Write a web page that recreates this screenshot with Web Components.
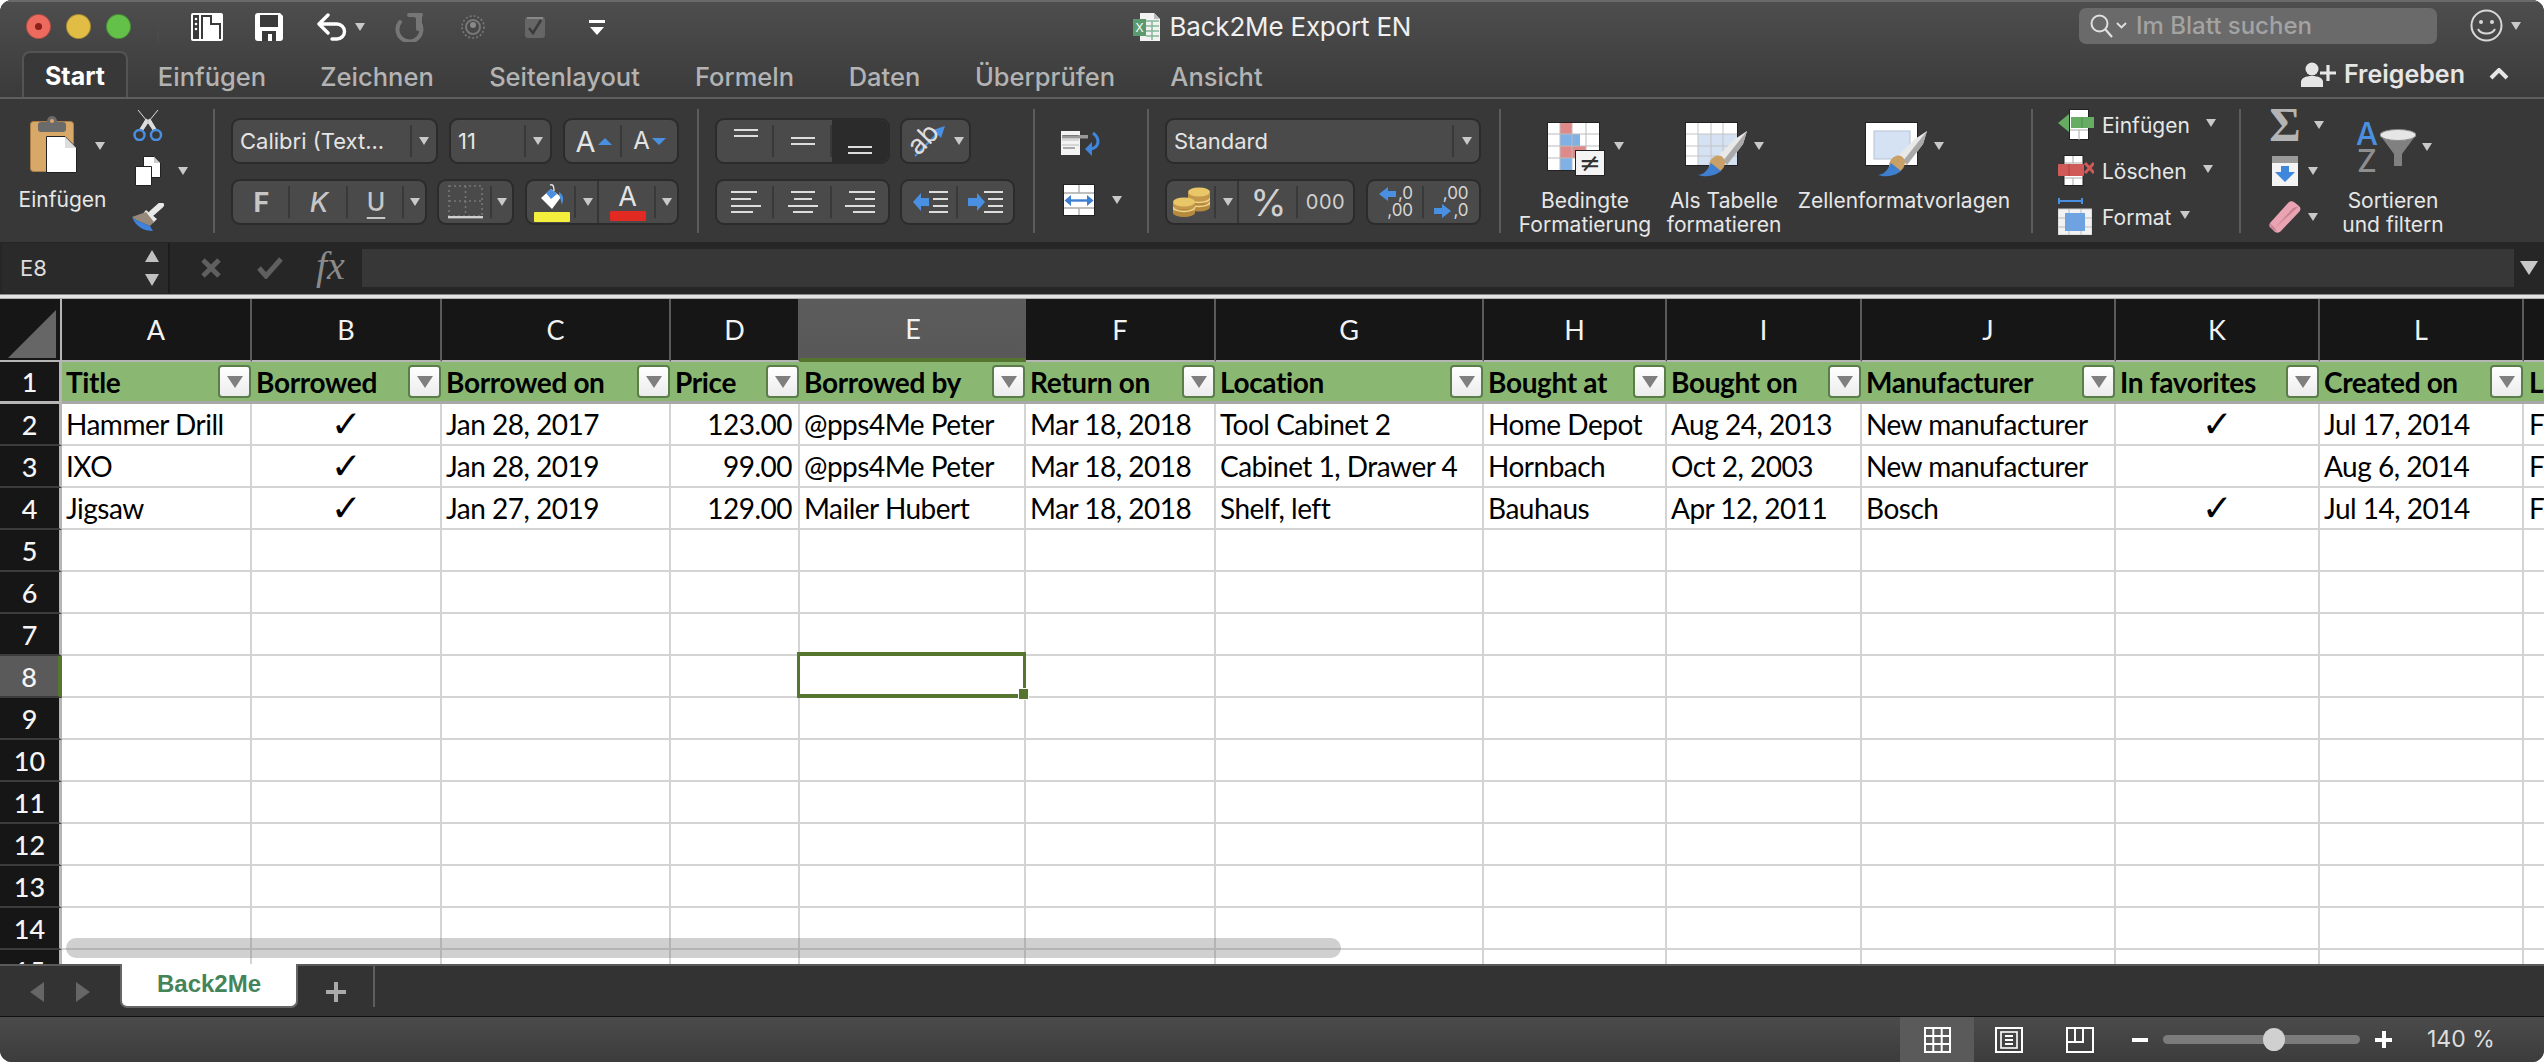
<!DOCTYPE html>
<html lang="de"><head><meta charset="utf-8"><title>Back2Me Export EN</title>
<style>html,body{margin:0;padding:0;background:#fff;overflow:hidden}</style></head>
<body><x-window></x-window>
<script>
const ICONS={
sidebar:[32,28,'<rect width="32" height="28" rx="2" fill="#fff"/><rect x="2" y="2" width="6" height="24" fill="#3a3a3a"/><circle cx="5" cy="6" r="1.3" fill="#fff"/><circle cx="5" cy="11" r="1.3" fill="#fff"/><circle cx="5" cy="16" r="1.3" fill="#fff"/><path d="M10 2H21V10H30V26H28V12H19V4H12V26H10Z" fill="#3a3a3a"/>'],
save:[28,28,'<path d="M3 0H25L28 3V25a3 3 0 0 1-3 3H3a3 3 0 0 1-3-3V3a3 3 0 0 1 3-3Z" fill="#fff"/><rect x="5" y="2" width="18" height="12" fill="#3a3a3a"/><path d="M7 28V18H21V28H17V21H13V28Z" fill="#3a3a3a"/>'],
undo:[31,28,'<path d="M11 2L2 11L11 20M2 11H20a7.5 7.5 0 0 1 0 15H15" fill="none" stroke="#fff" stroke-width="3.4" stroke-linecap="round" stroke-linejoin="round"/>'],
redo:[30,30,'<path d="M6 10A12 12 0 1 0 24 9V17M15 3H27" fill="none" stroke="#767676" stroke-width="4" stroke-linecap="round"/><path d="M15 1H28V11Z" fill="#767676"/>'],
ring:[24,26,'<circle cx="12" cy="13" r="11" fill="#474747" stroke="#7a7a7a" stroke-width="1.6" stroke-dasharray="2 2"/><circle cx="12" cy="13" r="7" fill="none" stroke="#777" stroke-width="2"/><circle cx="12" cy="11" r="3" fill="#8a8a8a"/>'],
chk:[20,23,'<rect x="0" y="1" width="20" height="21" rx="3" fill="#666"/><path d="M2 1H18V3H2Z" fill="#888"/><path d="M4 12L8 17L16 4" fill="none" stroke="#3b3b3b" stroke-width="2.5"/>'],
custom:[16,15,'<rect width="16" height="3" fill="#fff"/><path d="M1 7H15L8 15Z" fill="#fff"/>'],
xls:[27,28,'<path d="M7 0H21L27 6V28H7Z" fill="#f2f2f2"/><path d="M21 0V6H27Z" fill="#bbb"/><path d="M13 8H26M13 13H26M13 18H26M13 23H26M19 8V27" stroke="#86b89a" stroke-width="1.6"/><rect x="0" y="6" width="13" height="17" fill="#5b9a6e"/><text x="6.5" y="19" font-family="Liberation Sans" font-size="12" fill="#fff" text-anchor="middle">X</text>'],
search:[24,24,'<circle cx="9.5" cy="9.5" r="8" fill="none" stroke="#e0e0e0" stroke-width="2"/><path d="M15 15L22 23" stroke="#e0e0e0" stroke-width="2.2"/>'],
chev:[11,7,'<path d="M1 1L5.5 5.5L10 1" fill="none" stroke="#e0e0e0" stroke-width="1.8"/>'],
smile:[33,33,'<circle cx="16.5" cy="16.5" r="15" fill="none" stroke="#d8d8d8" stroke-width="2"/><circle cx="11" cy="13" r="2" fill="#d8d8d8"/><circle cx="22" cy="13" r="2" fill="#d8d8d8"/><path d="M8 20C11 26 22 26 25 20" fill="none" stroke="#d8d8d8" stroke-width="2"/>'],
person:[35,25,'<circle cx="11" cy="7" r="6.5" fill="#e6e6e6"/><path d="M0 25V20C0 16 5 14 11 14S22 16 22 20V25Z" fill="#e6e6e6"/><path d="M27 3V19M19 11H35" stroke="#e6e6e6" stroke-width="3.2"/>'],
up:[20,12,'<path d="M2 10L10 2L18 10" fill="none" stroke="#e6e6e6" stroke-width="4"/>'],
clip:[47,58,'<rect x="0.5" y="6.5" width="43" height="50" rx="3" fill="#d7a868" stroke="#a87f49"/><rect x="8" y="7" width="28" height="10" rx="3" fill="#6b6b6b"/><circle cx="22" cy="6" r="5" fill="#6b6b6b"/><circle cx="22" cy="6" r="2" fill="#d7a868"/><path d="M16.5 21.5H35L46.5 33V57.5H16.5Z" fill="#fff" stroke="#222"/><path d="M35 22V33H46Z" fill="#ddd"/>'],
cut:[30,32,'<path d="M5 1L14 12L20 21L23 20L17 10L14 12M25 1L16 12L10 21L7 20L13 10L16 12" fill="#dedede" stroke="#dedede" stroke-width="1"/><circle cx="6.5" cy="26" r="5" fill="none" stroke="#4a90e2" stroke-width="2.4"/><circle cx="23" cy="26" r="5" fill="none" stroke="#4a90e2" stroke-width="2.4"/>'],
copy:[26,30,'<path d="M8.5 .5H19L25.5 7V21.5H8.5Z" fill="#fff" stroke="#222"/><path d="M19 1V7H25Z" fill="#ccc"/><path d="M.5 10.5H16.5V29.5H.5Z" fill="#fff" stroke="#222"/>'],
brush:[33,29,'<path d="M20 10L29 2" stroke="#e8e8e8" stroke-width="6" stroke-linecap="round"/><path d="M14 7L25 16L21 20L10 12Z" fill="#e8e8e8"/><path d="M0 14L14 9L22 19L18 23L4 17Z" fill="#97897a"/><path d="M0 14L4 17L18 23L21 28C12 28 4 24 0 14Z" fill="#3f82db"/>'],
borders:[35,34,'<rect x="1" y="1" width="33" height="30" fill="none" stroke="#777" stroke-width="1.6" stroke-dasharray="2 3"/><path d="M17.5 1V31M1 16H34" stroke="#777" stroke-width="1.6" stroke-dasharray="2 3"/><rect y="31" width="35" height="2.4" fill="#cfcfcf"/>'],
bucket:[26,28,'<path d="M11 2C14 1 15 3 15 8" fill="none" stroke="#ddd" stroke-width="1.5"/><path d="M2 15L12 6L22 14L13 26Z" fill="#fff"/><path d="M7 10L12 6L18 11L12 16Z" fill="#4a90e2"/><path d="M20 9C26 13 24 18 23 22C22 18 21 14 20 12Z" fill="#4a90e2"/>'],
lt:[24,8,'<rect width="24" height="2" fill="#ddd"/><rect y="6" width="24" height="2" fill="#ddd"/>'],
al:[30,22,'<path d="M0 1H26M0 8H20M0 15H30M0 21H22" stroke="#ddd" stroke-width="2"/>'],
ac:[30,22,'<path d="M3 1H27M6 8H24M0 15H30M5 21H25" stroke="#ddd" stroke-width="2"/>'],
ar:[30,22,'<path d="M4 1H30M10 8H30M0 15H30M8 21H30" stroke="#ddd" stroke-width="2"/>'],
orient:[34,32,'<path d="M3 31L27 7" stroke="#4a90e2" stroke-width="2"/><path d="M33 1L29 13L21 5Z" fill="#4a90e2"/>'],
indl:[35,22,'<path d="M16 1H35M20 8H35M20 15H35M16 21H35" stroke="#ddd" stroke-width="2"/><path d="M0 11L8 2V7H16V15H8V20Z" fill="#4a90e2"/>'],
indr:[35,22,'<path d="M16 1H35M20 8H35M20 15H35M16 21H35" stroke="#ddd" stroke-width="2"/><path d="M17 11L9 2V7H0V15H9V20Z" fill="#4a90e2"/>'],
wrap:[40,26,'<rect x="0" y="1" width="19" height="24" fill="#f3f3f3"/><rect x="1" y="5" width="26" height="3.5" fill="#999"/><rect x="2" y="5" width="15" height="1" fill="#777"/><rect x="2" y="17" width="12" height="2" fill="#aaa"/><path d="M1 10H18M1 15H18" stroke="#bbb"/><path d="M32 3C40 9 38 18 29 19" fill="none" stroke="#3f86dd" stroke-width="3"/><path d="M31 12V26L24 19Z" fill="#3f86dd"/>'],
merge:[32,32,'<rect x=".5" y=".5" width="31" height="31" fill="#fff" stroke="#222"/><path d="M1 9H31M1 24H31M16 1V9M16 24V31" stroke="#aaa" stroke-width="1.3"/><rect x="1" y="10" width="30" height="13" fill="#fff"/><path d="M6 16.5H26" stroke="#3f7fd0" stroke-width="2.4"/><path d="M1.5 16.5L8 11V22ZM30.5 16.5L24 11V22Z" fill="#3f7fd0"/>'],
coins:[37,30,'<rect x="15" y="6" width="22" height="14" fill="#c4984a"/><ellipse cx="26" cy="20" rx="11" ry="4.5" fill="#b58a3e"/><path d="M15 11a11 4.5 0 0 0 22 0M15 15a11 4.5 0 0 0 22 0" fill="none" stroke="#f0d68a" stroke-width="1.4"/><ellipse cx="26" cy="5" rx="11" ry="4.5" fill="#e9c768"/><rect x="0" y="16" width="22" height="10" fill="#c4984a"/><ellipse cx="11" cy="26" rx="11" ry="4" fill="#b58a3e"/><path d="M0 20a11 4.5 0 0 0 22 0" fill="none" stroke="#f0d68a" stroke-width="1.4"/><ellipse cx="11" cy="15" rx="11" ry="4.5" fill="#e9c768"/>'],
arl:[17,14,'<path d="M0 7L9 0V4H17V10H9V14Z" fill="#4a90e2"/>'],
arr:[17,14,'<path d="M17 7L8 0V4H0V10H8V14Z" fill="#4a90e2"/>'],
cond:[58,54,'<rect x=".5" y=".5" width="52" height="48" fill="#fff" stroke="#222"/><rect x="13" y="1" width="12" height="11" fill="#dd8a88"/><rect x="13" y="12" width="20" height="12" fill="#7fb0e6"/><rect x="13" y="24" width="26" height="12" fill="#dd8a88"/><rect x="13" y="36" width="12" height="12" fill="#7fb0e6"/><path d="M13 1V48M25 1V48M39 1V48M1 12H52M1 24H52M1 36H52" stroke="#bbb" stroke-width="1" fill="none"/><rect x="28.5" y="28.5" width="29" height="25" fill="#f4f4f4" stroke="#222"/>'],
tstyle:[63,55,'<rect x=".5" y=".5" width="52" height="43" fill="#fff" stroke="#222"/><rect x="13" y="12" width="39" height="31" fill="#d5e2f3"/><path d="M13 1V43M26 1V43M38 1V43M1 12H52M1 24H52M1 34H52" stroke="#c4c4c4" fill="none"/><path d="M62 9L58 22L42 43L33 34L50 17Z" fill="#e9e9e9"/><path d="M62 9L58 22L42 43L38 39Z" fill="#a9a9a9"/><ellipse cx="32" cy="42" rx="7.5" ry="9" fill="#c9a168" transform="rotate(35 32 42)"/><path d="M13 53C22 52 24 44 26 41L36 49C31 53 23 56 13 53Z" fill="#3f7fd0"/>'],
cstyle:[63,55,'<rect x=".5" y=".5" width="52" height="43" fill="#fff" stroke="#222"/><rect x="9" y="9" width="36" height="28" fill="#d5e2f3" stroke="#b5c2d3"/><path d="M62 9L58 22L42 43L33 34L50 17Z" fill="#e9e9e9"/><path d="M62 9L58 22L42 43L38 39Z" fill="#a9a9a9"/><ellipse cx="32" cy="42" rx="7.5" ry="9" fill="#c9a168" transform="rotate(35 32 42)"/><path d="M13 53C22 52 24 44 26 41L36 49C31 53 23 56 13 53Z" fill="#3f7fd0"/>'],
cins:[36,32,'<rect x="11.500" y=".5" width="19" height="30" fill="#fff" stroke="#222"/><path d="M12 21H30M21 21V31" stroke="#aaa"/><rect x="13" y="8" width="23" height="11" fill="#66ad63"/><path d="M24 8V19" stroke="#4c8c4c"/><path d="M0 14L11 5V23Z" fill="#66ad63"/>'],
cdel:[36,32,'<rect x="6" y=".5" width="19" height="30" fill="#fff" stroke="#222"/><path d="M7 8H24M15 1V8M7 23H24M15 23V30" stroke="#aaa"/><rect x="0" y="9" width="26" height="12" rx="1" fill="#cf5a58"/><path d="M11 9V21" stroke="#a84442"/><path d="M27 8L36 18M36 8L27 18" stroke="#cf5a58" stroke-width="3"/>'],
cfmt:[34,37,'<path d="M1 3H24" stroke="#4a90e2" stroke-width="2" stroke-dasharray="0"/><path d="M1 0V6M24 0V6" stroke="#4a90e2" stroke-width="2"/><rect y="11" width="34" height="26" fill="#f2f2f2" stroke="#ccc"/><path d="M11 11V37M23 11V37M0 20H34M0 29H34" stroke="#bbb"/><rect x="7" y="15" width="20" height="18" fill="#6fa2e0"/>'],
filld:[26,30,'<rect width="26" height="30" fill="#f4f4f4"/><rect width="26" height="7" fill="#9a9a9a"/><path d="M13 26L3 16H9V10H17V16H23Z" fill="#3f86dd"/>'],
eraser:[32,32,'<path d="M1 22L19 2C21 0 23 0 25 1L30 5C32 7 32 9 30 11L12 30C10 32 8 32 6 31L2 27C0 26 0 24 1 22Z" fill="#e9a3b2"/><path d="M1 22L6 27L8 31L2 27Z M6 27L24 7L30 5" fill="#c98292"/>'],
funnel:[36,38,'<path d="M0 6L14 25V37L22 37V25L36 6Z" fill="#808080"/><ellipse cx="18" cy="6" rx="18" ry="5.500" fill="#e6e6e6" stroke="#8a8a8a"/>'],
az:[26,52,'<text x="13" y="23" text-anchor="middle" font-family="Inter" font-weight="500" font-size="31" fill="#4a90e2">A</text><text x="13" y="50" text-anchor="middle" font-family="Inter" font-weight="500" font-size="31" fill="#8e8e8e">Z</text>'],
fxx:[22,20,'<path d="M3 2L19 18M19 2L3 18" stroke="#5f5f5f" stroke-width="5"/>'],
fxc:[28,22,'<path d="M3 11L10 19L25 2" fill="none" stroke="#5f5f5f" stroke-width="5"/>'],
vgrid:[27,26,'<rect x="1" y="1" width="25" height="24" fill="none" stroke="#fff" stroke-width="2"/><path d="M9.300 1V25M17.700 1V25M1 9H26M1 17H26" stroke="#fff" stroke-width="2"/>'],
vpage:[28,26,'<rect x="1" y="1" width="26" height="24" fill="none" stroke="#fff" stroke-width="2"/><rect x="6" y="5" width="16" height="16" fill="none" stroke="#fff" stroke-width="1.600"/><path d="M10 9H18M10 13H18M10 17H18" stroke="#fff" stroke-width="1.800"/>'],
vbreak:[28,26,'<rect x="1" y="1" width="26" height="24" fill="none" stroke="#fff" stroke-width="2"/><path d="M1 15H17V1M9 1V15" fill="none" stroke="#fff" stroke-width="2"/>']
};
function def(name,css,html,init){
  customElements.define(name,class extends HTMLElement{
    constructor(){super();const r=this.attachShadow({mode:'open'});
      r.innerHTML='<style>'+css+'</style>'+(typeof html==='function'?html(this):html);}
    connectedCallback(){if(init&&!this._i){this._i=1;init(this);}}
  });
}
customElements.define('x-icon',class extends HTMLElement{
  constructor(){super();this.attachShadow({mode:'open'});}
  connectedCallback(){const d=ICONS[this.getAttribute('n')];
    this.shadowRoot.innerHTML=`<style>:host{display:block;flex:none;line-height:0}</style><svg xmlns="http://www.w3.org/2000/svg" width="${d[0]}" height="${d[1]}" viewBox="0 0 ${d[0]} ${d[1]}">${d[2]}</svg>`;}
});
customElements.define('x-caret',class extends HTMLElement{
  constructor(){super();this.attachShadow({mode:'open'}).innerHTML=`<style>:host{display:block;flex:none;width:10px;height:8px;line-height:0}</style><svg width="10" height="8" viewBox="0 0 10 8"><path d="M0 0H10L5 8Z" fill="#c9c9c9"/></svg>`;}
});
def('x-seg',`:host{display:flex;box-sizing:border-box;height:46px;border:2px solid #2b2b2b;border-radius:9px;background:#4a4a4a;overflow:hidden;flex:none}`,`<slot></slot>`);
def('x-c',`:host{display:flex;flex:none;align-items:center;justify-content:center;position:relative;height:100%;box-sizing:border-box;font:400 22px/1 Inter,sans-serif;color:#e4e4e4}
:host([l]){justify-content:flex-start;padding-left:7px}
:host([d])::after{content:"";position:absolute;right:0;top:5px;bottom:5px;width:2px;background:#393939}
:host([f])::after{content:"";position:absolute;right:0;top:0;bottom:0;width:2px;background:#363636}
:host([on]){background:#2b2b2b}`,`<slot></slot>`);

def('x-titlebar',`:host{display:flex;align-items:center;height:55px;position:relative}
.light{width:25px;height:25px;border-radius:50%;box-sizing:border-box;border:1px solid rgba(0,0,0,.25);flex:none;margin-top:-3px;display:flex;align-items:center;justify-content:center}
.light b{width:7px;height:7px;border-radius:50%;background:#8a2018}
.sep{width:2px;height:32px;background:#4a4a4a;margin:-4px 0 0 26px;flex:none}
x-icon,x-caret{margin-top:-1px}
.title{font:400 26px/1 Inter,sans-serif;color:#f0f0f0;white-space:nowrap;letter-spacing:-.2px;margin-left:10px;margin-top:-2px}
.search{position:absolute;left:2079px;top:8px;width:358px;height:36px;border-radius:7px;background:#6a6a6a;display:flex;align-items:center;box-sizing:border-box;padding-left:11px}
.search span{font:500 24px/1 Inter,sans-serif;color:#a3a3a3;margin-left:9px;white-space:nowrap}
.end{position:absolute;left:2470px;top:10px;display:flex;align-items:center}`,
`<i class="light" style="margin-left:25.5px;background:#ec6a5e"><b></b></i><i class="light" style="margin-left:15px;background:#e2bd45"></i><i class="light" style="margin-left:15px;background:#63c14a"></i>
<i class="sep"></i>
<x-icon n="sidebar" style="margin-left:32px"></x-icon><x-icon n="save" style="margin-left:32px"></x-icon><x-icon n="undo" style="margin-left:34px"></x-icon><x-caret style="margin-left:7px"></x-caret><x-icon n="redo" style="margin-left:29px"></x-icon><x-icon n="ring" style="margin-left:37px"></x-icon><x-icon n="chk" style="margin-left:40px"></x-icon><x-icon n="custom" style="margin-left:44px"></x-icon>
<x-icon n="xls" style="margin-left:528px"></x-icon><span class="title">Back2Me Export EN</span>
<div class="search"><x-icon n="search"></x-icon><x-icon n="chev" style="margin-left:2px"></x-icon><span>Im Blatt suchen</span></div>
<div class="end"><x-icon n="smile"></x-icon><x-caret style="margin-left:8px"></x-caret></div>`);

def('x-tab',`:host{display:flex;align-items:center;justify-content:center;flex:none;height:100%;font:500 25.5px/1 Inter,sans-serif;color:#b3b3b3;box-sizing:border-box;padding-top:2px}
:host([on]){font-weight:700;color:#fff;background:#383838;border:2px solid #545454;border-bottom:0;border-radius:8px 8px 0 0;height:46px;position:relative;z-index:1;margin-top:-1px;font-size:25px}`,`<slot></slot>`);
def('x-tabs',`:host{display:flex;align-items:flex-end;height:44px;box-sizing:border-box;border-bottom:2px solid #5e5e5e;padding-left:22px;position:relative}
.share{position:absolute;left:2301px;top:-3px;height:44px;display:flex;align-items:center;font:600 25px/1 Inter,sans-serif;color:#e6e6e6}
.share span{margin-left:8px}.share x-icon:last-child{margin-left:24px}`,
`<x-tab on style="width:106px">Start</x-tab><x-tab style="width:162px;margin-left:3px;height:42px">Einfügen</x-tab><x-tab style="width:168px;height:42px">Zeichnen</x-tab><x-tab style="width:207px;height:42px">Seitenlayout</x-tab><x-tab style="width:153px;height:42px">Formeln</x-tab><x-tab style="width:127px;height:42px">Daten</x-tab><x-tab style="width:194px;height:42px">Überprüfen</x-tab><x-tab style="width:149px;height:42px">Ansicht</x-tab>
<div class="share"><x-icon n="person"></x-icon><span>Freigeben</span><x-icon n="up"></x-icon></div>`);

const lbl=`font:400 21px/24px Inter,sans-serif;color:#e6e6e6;text-align:center;white-space:nowrap`;
def('x-g-clip',`:host{display:flex;box-sizing:border-box;height:100%;padding-top:16px}
.l{width:105px;margin-left:10px;display:flex;flex-direction:column}
.top{display:flex;align-items:center;padding-left:20px;height:58px}
.lab{${lbl};margin-top:15px}
.r{margin-left:17px;display:flex;flex-direction:column}
.row{display:flex;align-items:center}`,
`<div class="l"><div class="top"><x-icon n="clip"></x-icon><x-caret style="margin-left:18px;margin-top:4px"></x-caret></div><div class="lab">Einfügen</div></div>
<div class="r"><div class="row" style="height:32px;margin-top:-6px"><x-icon n="cut" style="margin-left:1px"></x-icon></div><div class="row" style="margin-top:15px;height:30px"><x-icon n="copy" style="margin-left:3px"></x-icon><x-caret style="margin-left:17px"></x-caret></div><div class="row" style="margin-top:17px;height:29px"><x-icon n="brush"></x-icon></div></div>`);

const rows=`:host{display:flex;flex-direction:column;box-sizing:border-box;height:100%;padding:19px 0 0 16px;gap:15px}.row{display:flex;align-items:center;height:46px}`;
def('x-g-font',rows+`.a{font-size:29px}.b{font-size:24px}
.F{font:700 27px/1 Inter,sans-serif;color:#c6c6c6}.K{font:italic 500 27px/1 Inter,sans-serif;color:#c6c6c6}.U{font:500 25px/1 Inter,sans-serif;color:#c6c6c6;text-decoration:underline;text-underline-offset:6px;text-decoration-thickness:2px}
.tri{width:0;height:0;border:7px solid transparent;margin-left:2px}
.col{display:flex;flex-direction:column;align-items:center}
.bar{width:36px;height:10px;border-radius:1px;margin-top:1px}`,
`<div class="row"><x-seg style="width:207px"><x-c l d style="width:179px">Calibri (Text...</x-c><x-c style="width:24px"><x-caret></x-caret></x-c></x-seg>
<x-seg style="width:103px;margin-left:11px"><x-c l d style="width:75px">11</x-c><x-c style="width:24px"><x-caret></x-caret></x-c></x-seg>
<x-seg style="width:116px;margin-left:11px"><x-c d style="width:57px"><span class="a">A</span><i class="tri" style="border-bottom-color:#4a90e2;border-top:0"></i></x-c><x-c style="width:55px"><span class="b">A</span><i class="tri" style="border-top-color:#4a90e2;border-bottom:0"></i></x-c></x-seg></div>
<div class="row"><x-seg style="width:196px"><x-c d style="width:57px"><span class="F">F</span></x-c><x-c d style="width:58px"><span class="K">K</span></x-c><x-c d style="width:56px"><span class="U">U</span></x-c><x-c style="width:21px"><x-caret></x-caret></x-c></x-seg>
<x-seg style="width:77px;margin-left:10px"><x-c d style="width:53px"><x-icon n="borders"></x-icon></x-c><x-c style="width:20px"><x-caret></x-caret></x-c></x-seg>
<x-seg style="width:154px;margin-left:11px"><x-c d style="width:49px"><div class="col"><x-icon n="bucket"></x-icon><div class="bar" style="background:#f4ee3c"></div></div></x-c><x-c f style="width:23px"><x-caret></x-caret></x-c><x-c d style="width:57px"><div class="col"><span class="a" style="line-height:27px;font-size:27px">A</span><div class="bar" style="background:#e02a22"></div></div></x-c><x-c style="width:21px"><x-caret></x-caret></x-c></x-seg></div>`);
def('x-g-align',rows+`.ab{position:absolute;left:5px;top:5px;font:400 27px/1 Inter,sans-serif;color:#ddd;transform:rotate(-45deg)}`,
`<div class="row"><x-seg style="width:175px"><x-c d style="width:57px;align-items:flex-start;padding-top:9px"><x-icon n="lt"></x-icon></x-c><x-c d style="width:58px"><x-icon n="lt"></x-icon></x-c><x-c on style="width:56px;align-items:flex-end;padding-bottom:8px"><x-icon n="lt"></x-icon></x-c></x-seg>
<x-seg style="width:71px;margin-left:10px"><x-c style="width:67px;padding-left:10px;justify-content:flex-start"><span class="ab">ab</span><x-icon n="orient"></x-icon><x-caret style="margin-left:8px"></x-caret></x-c></x-seg></div>
<div class="row"><x-seg style="width:175px"><x-c d style="width:57px"><x-icon n="al"></x-icon></x-c><x-c d style="width:58px"><x-icon n="ac"></x-icon></x-c><x-c style="width:56px"><x-icon n="ar"></x-icon></x-c></x-seg>
<x-seg style="width:115px;margin-left:10px"><x-c d style="width:56px"><x-icon n="indl"></x-icon></x-c><x-c style="width:55px"><x-icon n="indr"></x-icon></x-c></x-seg></div>`);
def('x-g-wrap',`:host{display:flex;flex-direction:column;box-sizing:border-box;height:100%;padding:31px 0 0 26px}.row{display:flex;align-items:center}`,
`<x-icon n="wrap"></x-icon><div class="row" style="margin-top:28px;padding-left:2px"><x-icon n="merge"></x-icon><x-caret style="margin-left:17px"></x-caret></div>`);
def('x-g-num',rows+`.p{font:400 37px/1 Inter,sans-serif;color:#d0d0d0}.k{font:400 20px/1 Inter,sans-serif;color:#d0d0d0;letter-spacing:.5px}
.dec{display:grid;grid-template-columns:auto auto;font:400 17px/17px Inter,sans-serif;color:#d6d6d6;justify-items:end;align-items:center}`,
`<div class="row"><x-seg style="width:316px"><x-c l d style="width:287px">Standard</x-c><x-c style="width:25px"><x-caret></x-caret></x-c></x-seg></div>
<div class="row"><x-seg style="width:190px"><x-c d style="width:49px"><x-icon n="coins"></x-icon></x-c><x-c f style="width:23px"><x-caret></x-caret></x-c><x-c d style="width:59px"><span class="p">%</span></x-c><x-c style="width:55px"><span class="k">000</span></x-c></x-seg>
<x-seg style="width:115px;margin-left:11px"><x-c d style="width:56px"><div class="dec"><x-icon n="arl" style="margin-right:2px"></x-icon><span>,0</span><span style="grid-column:1/3">,00</span></div></x-c><x-c style="width:55px"><div class="dec"><span style="grid-column:1/3">,00</span><x-icon n="arr" style="margin-right:2px"></x-icon><span>,0</span></div></x-c></x-seg></div>`);
def('x-g-styles',`:host{display:grid;grid-template-columns:168px 110px 250px;box-sizing:border-box;height:100%;padding-top:23px}
.col{display:flex;flex-direction:column;align-items:center}.top{display:flex;height:56px}.top x-caret{margin:20px 0 0 6px}
.lab{${lbl};margin-top:11px}.ne{position:absolute;left:29px;top:29px;width:29px;height:25px;text-align:center;font:500 26px/25px "DejaVu Sans",sans-serif;color:#333}.wrap{position:relative}`,
`<div class="col"><div class="top"><div class="wrap"><x-icon n="cond"></x-icon><span class="ne">≠</span></div><x-caret style="margin-left:9px"></x-caret></div><div class="lab">Bedingte<br>Formatierung</div></div>
<div class="col"><div class="top"><x-icon n="tstyle"></x-icon><x-caret></x-caret></div><div class="lab">Als Tabelle<br>formatieren</div></div>
<div class="col"><div class="top"><x-icon n="cstyle"></x-icon><x-caret></x-caret></div><div class="lab">Zellenformatvorlagen</div></div>`);
def('x-g-cells',`:host{display:flex;flex-direction:column;box-sizing:border-box;height:100%;padding:3px 0 0 25px}
.row{display:flex;align-items:center;height:46px;font:400 21px/1 Inter,sans-serif;color:#e6e6e6;white-space:nowrap}
.t{margin-left:8px}x-caret{margin-top:-4px}`,
`<div class="row"><x-icon n="cins"></x-icon><span class="t">Einfügen</span><x-caret style="margin-left:16px"></x-caret></div>
<div class="row"><x-icon n="cdel"></x-icon><span class="t">Löschen</span><x-caret style="margin-left:16px"></x-caret></div>
<div class="row"><x-icon n="cfmt" style="margin-top:-2px"></x-icon><span class="t" style="margin-left:10px">Format</span><x-caret style="margin-left:9px"></x-caret></div>`);
def('x-g-edit',`:host{display:flex;box-sizing:border-box;height:100%;padding:3px 0 0 27px}
.l{width:65px}.row{display:flex;align-items:center;height:46px}.ic{width:34px;display:flex;justify-content:center}
.sig{font:700 48px/46px "Liberation Serif",serif;color:#b4b4b4}
.r{width:120px;padding-top:20px;display:flex;flex-direction:column;align-items:center}
.top{display:flex;height:56px;align-items:flex-start}
.lab{${lbl};margin-top:11px}`,
`<div class="l"><div class="row"><span class="ic"><span class="sig">Σ</span></span><x-caret style="margin-left:12px"></x-caret></div>
<div class="row"><span class="ic"><x-icon n="filld"></x-icon></span><x-caret style="margin-left:6px"></x-caret></div>
<div class="row"><span class="ic"><x-icon n="eraser"></x-icon></span><x-caret style="margin-left:6px"></x-caret></div></div>
<div class="r"><div class="top"><x-icon n="az"></x-icon><x-icon n="funnel" style="margin:7px 0 0 0"></x-icon><x-caret style="margin:21px 0 0 6px"></x-caret></div><div class="lab">Sortieren<br>und filtern</div></div>`);
def('x-ribbon',`:host{display:grid;grid-template-columns:213px 2px 482px 2px 334px 2px 112px 2px 350px 2px 530px 2px 206px 2px 1fr;height:143px;background:#383838}
.s{background:#5c5c5c;margin:10px 0 9px}`,
`<x-g-clip></x-g-clip><i class="s"></i><x-g-font></x-g-font><i class="s"></i><x-g-align></x-g-align><i class="s"></i><x-g-wrap></x-g-wrap><i class="s"></i><x-g-num></x-g-num><i class="s"></i><x-g-styles></x-g-styles><i class="s"></i><x-g-cells></x-g-cells><i class="s"></i><x-g-edit></x-g-edit>`);
def('x-formula',`:host{display:flex;align-items:center;height:52px;background:#262626;box-sizing:border-box}
.name{width:168px;height:50px;margin-left:2px;background:#2a2a2a;box-sizing:border-box;border-right:2px solid #1c1c1c;display:flex;align-items:center;padding-left:18px;font:400 22px/1 Inter,sans-serif;color:#dcdcdc;position:relative;flex:none}
.ud{margin-left:auto;margin-right:9px;display:flex;flex-direction:column;gap:12px}
.ud i{display:block;width:0;height:0;border-left:7px solid transparent;border-right:7px solid transparent}
.fx{font:italic 400 40px/1 "Liberation Serif",serif;color:#8a8a8a;margin-left:32px;width:30px;flex:none;white-space:nowrap;margin-top:-4px}
.in{flex:1;height:38px;background:#373737;margin-left:16px}
.c{width:0;height:0;border-left:9px solid transparent;border-right:9px solid transparent;border-top:14px solid #c8c8c8;margin:0 6px 0 6px}`,
`<div class="name">E8<div class="ud"><i style="border-bottom:12px solid #c0c0c0"></i><i style="border-top:12px solid #c0c0c0"></i></div></div>
<x-icon n="fxx" style="margin-left:30px"></x-icon><x-icon n="fxc" style="margin-left:34px"></x-icon><span class="fx">fx</span><div class="in"></div><i class="c"></i>`);
def('x-filter',`:host{position:absolute;right:1px;top:3px;width:33px;height:33px;box-sizing:border-box;background:linear-gradient(#fff,#ececec);border:2px solid #5a7d4a;border-radius:4px;display:flex;align-items:center;justify-content:center}
i{width:0;height:0;border-left:8px solid transparent;border-right:8px solid transparent;border-top:12px solid #7f7f7f}`,`<i></i>`);

const W=[190,190,229,129,226,190,268,183,195,254,204,204,100];
const L='ABCDEFGHIJKL'.split('');L.push('');
const C='✓';
const D=[
['Title','Borrowed','Borrowed on','Price','Borrowed by','Return on','Location','Bought at','Bought on','Manufacturer','In favorites','Created on','La'],
['Hammer Drill',C,'Jan 28, 2017','123.00','@pps4Me Peter','Mar 18, 2018','Tool Cabinet 2','Home Depot','Aug 24, 2013','New manufacturer',C,'Jul 17, 2014','Fe'],
['IXO',C,'Jan 28, 2019','99.00','@pps4Me Peter','Mar 18, 2018','Cabinet 1, Drawer 4','Hornbach','Oct 2, 2003','New manufacturer','','Aug 6, 2014','Fe'],
['Jigsaw',C,'Jan 27, 2019','129.00','Mailer Hubert','Mar 18, 2018','Shelf, left','Bauhaus','Apr 12, 2011','Bosch',C,'Jul 14, 2014','Fe']];
function sheetHTML(){
  let h='<div class="cell corner"><svg width="48" height="48" viewBox="0 0 48 48"><path d="M48 0V48H0Z" fill="#666"/></svg></div>';
  L.forEach((l,i)=>h+=`<div class="cell ch${i==4?' sel':''}">${l}</div>`);
  for(let r=1;r<=15;r++){
    h+=`<div class="cell rh${r==8?' sel':''}${r==1?' r1':''}">${r}</div>`;
    for(let c=0;c<13;c++){
      const t=(D[r-1]&&D[r-1][c])||'';
      let cl='cell d';
      if(r==1)cl+=' hd';
      if(t===C)cl+=' ck';
      if(c==3&&r>1)cl+=' num';
      if(c==12)cl+=' last';
      const extra=(r==1&&c<12)?'<x-filter></x-filter>':'';
      const sel=(r==8&&c==4)?'<div class="selbox"><i></i></div>':'';
      h+=`<div class="${cl}"><span>${t}</span>${extra}${sel}</div>`;
    }
  }
  return `<div class="top"></div><div class="grid">${h}</div><div class="thumb"></div>`;
}
def('x-sheet',`:host{display:block;height:670px;overflow:hidden;position:relative;background:#fff}
.top{height:5px;box-sizing:border-box;background:#e4e4e4;border-top:1px solid #8a8a8a;border-bottom:1px solid #b0b0b0}
.grid{display:grid;grid-template-columns:62px ${W.map(w=>w+'px').join(' ')};grid-template-rows:63px 42px repeat(14,42px);font:400 28px/1 Lato,sans-serif;letter-spacing:-.5px;color:#000}
.cell{box-sizing:border-box;display:flex;align-items:center;position:relative;white-space:nowrap;min-width:0}
.corner{background:#161616;border-right:2px solid #b5b5b5;border-bottom:2px solid #b5b5b5;padding:9px 0 0 8px}
.ch{background:#161616;color:#f2f2f2;justify-content:center;border-right:2px solid #5a5a5a;border-bottom:2px solid #b5b5b5;font-size:27px;letter-spacing:0}
.ch.sel{background:linear-gradient(#5c5c5c,#585858);border-right:0;border-bottom:4px solid #56752e}
.rh{background:#161616;color:#f5f5f5;justify-content:center;border-right:3px solid #b5b5b5;border-bottom:2px solid #3c3c3c;font-weight:500;font-size:27px;letter-spacing:0}
.rh.r1{border-bottom:3px solid #b5b5b5}
.rh.sel{background:#5a5a5a;border-right:4px solid #56752e}
.d{border-right:2px solid #d4d4d4;border-bottom:2px solid #d4d4d4;padding-left:4px;overflow:visible}
.d span{display:block}
.hd{background:#8ab873;font-weight:700;border-right:0;border-bottom:3px solid #a8a8a8;letter-spacing:-.35px}
.hd span{margin-left:0}
.ck{justify-content:center;padding-left:0}.ck span{font:700 37px/1 "DejaVu Sans",sans-serif}
.num{justify-content:flex-end;padding-right:6px}
.last{overflow:hidden;padding-left:5px;border-right:0}
.selbox{position:absolute;left:-3px;right:-2px;top:-4px;bottom:-2px;border:solid #56752e;border-width:4px 3px;z-index:3}
.selbox i{position:absolute;right:-6px;bottom:-6px;width:9px;height:10px;background:#56752e;border:1px solid #fff}
.thumb{position:absolute;left:66px;top:644px;width:1275px;height:20px;border-radius:10px;background:rgba(120,120,120,.35);z-index:4}`,sheetHTML);
def('x-sheettabs',`:host{display:flex;height:52px;background:#333;border-top:2px solid #5a5a5a;box-sizing:border-box;position:relative;align-items:flex-start}
.a{width:0;height:0;border-top:10px solid transparent;border-bottom:10px solid transparent;margin-top:16px}
.tab{width:178px;height:44px;margin:-2px 0 0 30px;background:#fff;border:solid #666;border-width:0 2px 2px;border-radius:0 0 7px 7px;display:flex;align-items:center;justify-content:center;font:700 24px/1 "Liberation Sans",sans-serif;color:#44845a;padding-bottom:2px;box-sizing:border-box;z-index:1}
.p{margin:16px 0 0 28px;width:20px;height:20px;position:relative}
.p::before,.p::after{content:"";position:absolute;background:#aaa}.p::before{left:8px;top:0;width:4px;height:20px}.p::after{left:0;top:8px;width:20px;height:4px}
.s{width:2px;height:41px;background:#5e5e5e;margin-left:27px}`,
`<i class="a" style="margin-left:30px;border-right:14px solid #666"></i><i class="a" style="margin-left:32px;border-left:14px solid #666"></i><div class="tab">Back2Me</div><div class="p"></div><i class="s"></i>`);
def('x-status',`:host{display:flex;align-items:center;height:46px;box-sizing:border-box;border-top:1px solid #111;background:linear-gradient(#4b4b4b,#3c3c3c);padding-left:1900px;color:#ddd}
.v{width:74px;height:45px;background:#5a5a5a;display:flex;align-items:center;justify-content:center;flex:none}
.m{width:16px;height:4px;background:#fff}
.tr{position:relative;width:197px;height:9px;background:#7b7b7b;border-radius:5px;margin-left:15px}
.kn{position:absolute;left:100px;top:-7px;width:22px;height:23px;border-radius:50%;background:#d0d0d0}
.pl{position:relative;width:17px;height:17px;margin-left:15px}
.pl::before,.pl::after{content:"";position:absolute;background:#fff}.pl::before{left:6.5px;top:0;width:4px;height:17px}.pl::after{left:0;top:6.5px;width:17px;height:4px}
.z{font:400 23px/1 Inter,sans-serif;margin-left:35px;white-space:nowrap}`,
`<div class="v"><x-icon n="vgrid"></x-icon></div><x-icon n="vpage" style="margin-left:21px"></x-icon><x-icon n="vbreak" style="margin-left:43px"></x-icon><i class="m" style="margin-left:38px"></i><div class="tr"><div class="kn"></div></div><div class="pl"></div><span class="z">140 %</span>`);
def('x-head',`:host{display:block;height:99px;background:linear-gradient(#4e4e4e,#3a3a3a);box-shadow:inset 0 2px 0 #6a6a6a}`,`<x-titlebar></x-titlebar><x-tabs></x-tabs>`);
def('x-window',`:host{display:flex;flex-direction:column;width:2544px;height:1062px;overflow:hidden;border-radius:12px;background:#383838}`,
`<x-head></x-head><x-ribbon></x-ribbon><x-formula></x-formula><x-sheet></x-sheet><x-sheettabs></x-sheettabs><x-status></x-status>`);
</script></body></html>
